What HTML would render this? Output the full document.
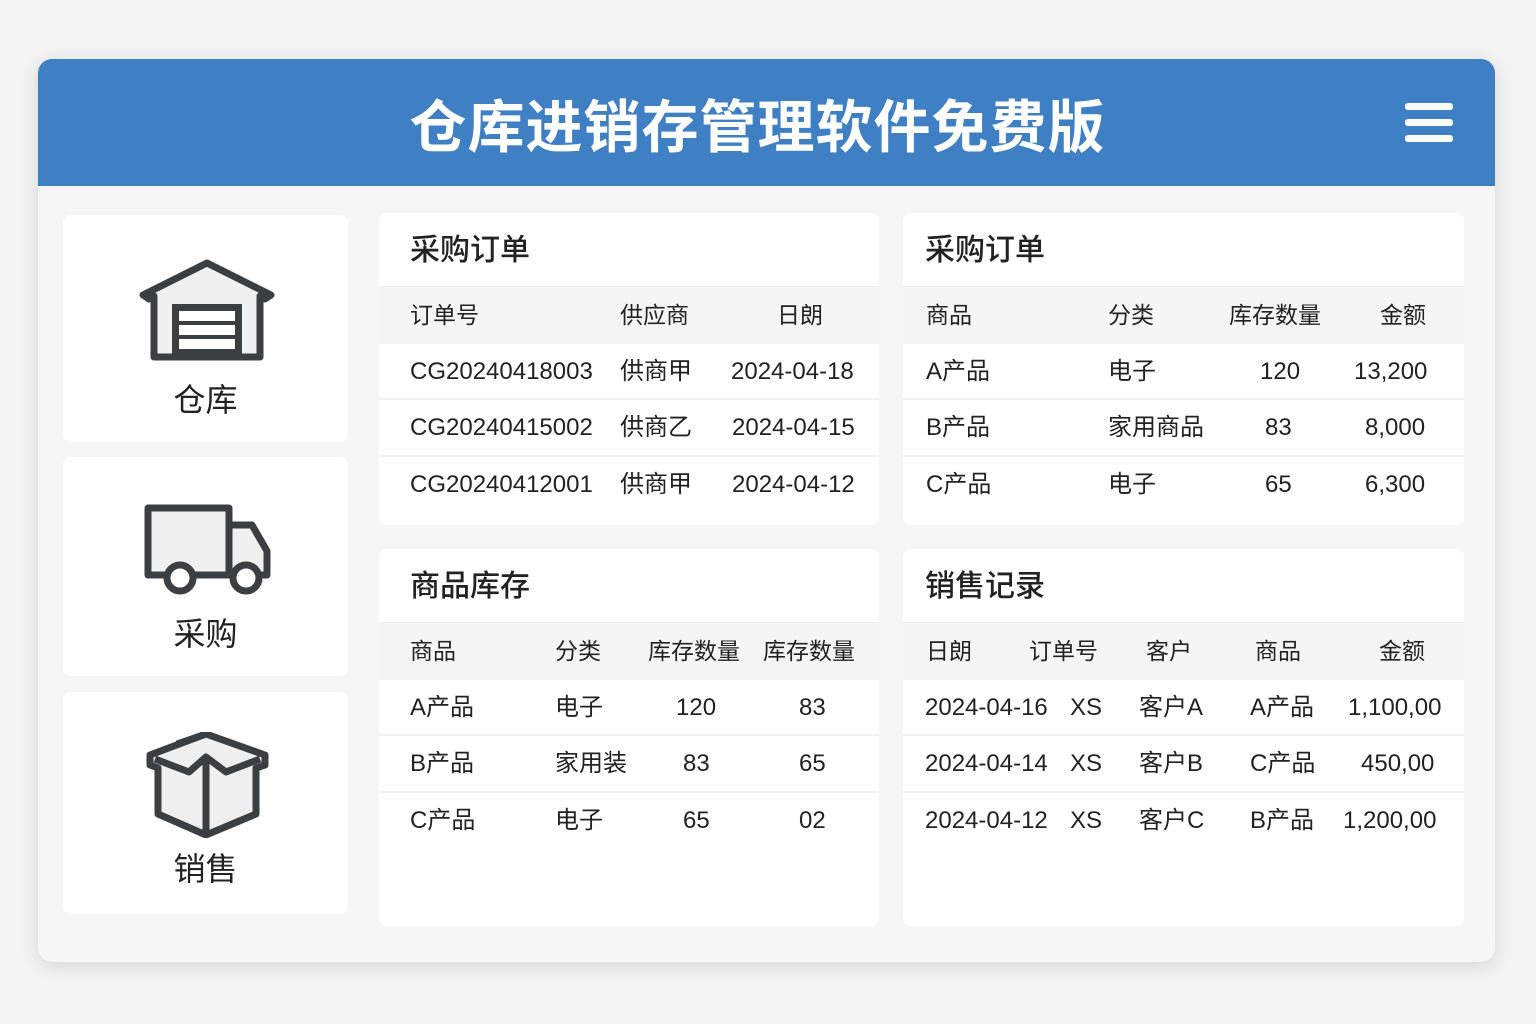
<!DOCTYPE html>
<html><head><meta charset="utf-8"><style>
*{margin:0;padding:0;box-sizing:border-box}
body{width:1536px;height:1024px;background:#f3f3f3;font-family:"Liberation Sans","Noto Sans CJK SC",sans-serif;color:#222;position:relative;overflow:hidden}
.main{position:absolute;left:38px;top:59px;width:1457px;height:903px;background:#f6f6f6;border-radius:14px;box-shadow:0 4px 18px rgba(0,0,0,.12);overflow:hidden}
.hdr{position:absolute;left:0;top:0;width:100%;height:127px;background:#3f7fc4}
.hdr h1{position:absolute;left:0;width:100%;top:23px;text-align:center;color:#fff;font-size:57px;font-weight:bold;letter-spacing:1px;padding-right:18px}
.ham{position:absolute;left:1367px;top:44px;width:48px}
.ham i{display:block;height:7px;background:#fff;border-radius:3px;margin-bottom:9px}
.side{position:absolute;left:25px;width:285px;background:#fff;border-radius:8px;text-align:center}
.side span{position:absolute;left:0;width:100%;font-size:32px;color:#222}
.panel{position:absolute;background:#fff;border-radius:8px;overflow:hidden}
.panel .t{height:74px;line-height:76px;padding-left:31px;font-size:30px;font-weight:500;border-bottom:1px solid #eee}
.r{position:relative;height:56.5px;border-bottom:2px solid #f1f1f1;font-size:24px}
.r.h{background:#f5f5f5;border-bottom:none;font-size:23px}
.r b{position:absolute;top:0;line-height:56px;font-weight:normal;white-space:nowrap}
</style></head><body>
<div class="main">
<div class="hdr"><h1>仓库进销存管理软件免费版</h1><div class="ham"><i></i><i></i><i></i></div></div>

<div class="side" style="top:156px;height:227px">
<svg style="position:absolute;left:76px;top:44px" width="136" height="104" viewBox="0 0 136 104"><path d="M4 36 L68 4 L132 36 L126 40 L121 37 V98 H15 V37 L10 40 Z" fill="#f0f0f0" stroke="#3c3f42" stroke-width="7" stroke-linejoin="round"/><rect x="33" y="45" width="70" height="54" fill="#3c3f42"/><rect x="40" y="52" width="56" height="10" fill="#fff"/><rect x="40" y="66" width="56" height="10" fill="#fff"/><rect x="40" y="80" width="56" height="10" fill="#fff"/></svg>
<span style="top:160px">仓库</span></div>

<div class="side" style="top:398px;height:219px">
<svg style="position:absolute;left:80px;top:46px" width="130" height="94" viewBox="0 0 130 94"><path d="M5 5 H86 V72 H5 Z" fill="#f0f0f0" stroke="#3c3f42" stroke-width="7" stroke-linejoin="round"/><path d="M86 22 H109 L124 48 V72 H86 Z" fill="#f0f0f0" stroke="#3c3f42" stroke-width="7" stroke-linejoin="round"/><circle cx="37" cy="75" r="13" fill="#fff" stroke="#3c3f42" stroke-width="7"/><circle cx="103" cy="75" r="13" fill="#fff" stroke="#3c3f42" stroke-width="7"/></svg>
<span style="top:152px">采购</span></div>

<div class="side" style="top:633px;height:222px">
<svg style="position:absolute;left:82px;top:40px" width="126" height="106" viewBox="0 0 126 106"><path d="M5 23 L61 2 L120 23 V33 L111 36 V82 L61 103 L13 82 V36 L5 33 Z" fill="#efefef" stroke="#3c3f42" stroke-width="7" stroke-linejoin="round"/><path d="M10 27 L44 40 L61 25 L81 40 L115 27 M61 25 V103 M61 2 L32 12" fill="none" stroke="#3c3f42" stroke-width="7" stroke-linejoin="round"/></svg>
<span style="top:152px">销售</span></div>

<div class="panel" style="left:341px;top:154px;width:500px;height:312px">
<div class="t">采购订单</div>
<div class="r h"><b style="left:31px">订单号</b><b style="left:241px">供应商</b><b style="left:398px">日朗</b></div>
<div class="r"><b style="left:31px">CG20240418003</b><b style="left:241px">供商甲</b><b style="left:352px">2024-04-18</b></div>
<div class="r"><b style="left:31px">CG20240415002</b><b style="left:241px">供商乙</b><b style="left:353px">2024-04-15</b></div>
<div class="r" style="border:none"><b style="left:31px">CG20240412001</b><b style="left:241px">供商甲</b><b style="left:353px">2024-04-12</b></div>
</div>

<div class="panel" style="left:865px;top:154px;width:561px;height:312px">
<div class="t" style="padding-left:22px">采购订单</div>
<div class="r h"><b style="left:23px">商品</b><b style="left:205px">分类</b><b style="left:326px">库存数量</b><b style="left:477px">金额</b></div>
<div class="r"><b style="left:23px">A产品</b><b style="left:205px">电子</b><b style="left:357px">120</b><b style="left:451px">13,200</b></div>
<div class="r"><b style="left:23px">B产品</b><b style="left:205px">家用商品</b><b style="left:362px">83</b><b style="left:462px">8,000</b></div>
<div class="r" style="border:none"><b style="left:23px">C产品</b><b style="left:205px">电子</b><b style="left:362px">65</b><b style="left:462px">6,300</b></div>
</div>

<div class="panel" style="left:341px;top:490px;width:500px;height:377px">
<div class="t">商品库存</div>
<div class="r h"><b style="left:31px">商品</b><b style="left:176px">分类</b><b style="left:269px">库存数量</b><b style="left:384px">库存数量</b></div>
<div class="r"><b style="left:31px">A产品</b><b style="left:176px">电子</b><b style="left:297px">120</b><b style="left:420px">83</b></div>
<div class="r"><b style="left:31px">B产品</b><b style="left:176px">家用装</b><b style="left:304px">83</b><b style="left:420px">65</b></div>
<div class="r" style="border:none"><b style="left:31px">C产品</b><b style="left:176px">电子</b><b style="left:304px">65</b><b style="left:420px">02</b></div>
</div>

<div class="panel" style="left:865px;top:490px;width:561px;height:377px">
<div class="t" style="padding-left:22px">销售记录</div>
<div class="r h"><b style="left:23px">日朗</b><b style="left:126px">订单号</b><b style="left:243px">客户</b><b style="left:352px">商品</b><b style="left:476px">金额</b></div>
<div class="r"><b style="left:22px">2024-04-16</b><b style="left:167px">XS</b><b style="left:236px">客户A</b><b style="left:347px">A产品</b><b style="left:445px">1,100,00</b></div>
<div class="r"><b style="left:22px">2024-04-14</b><b style="left:167px">XS</b><b style="left:236px">客户B</b><b style="left:347px">C产品</b><b style="left:458px">450,00</b></div>
<div class="r" style="border:none"><b style="left:22px">2024-04-12</b><b style="left:167px">XS</b><b style="left:236px">客户C</b><b style="left:347px">B产品</b><b style="left:440px">1,200,00</b></div>
</div>
</div>
</body></html>
